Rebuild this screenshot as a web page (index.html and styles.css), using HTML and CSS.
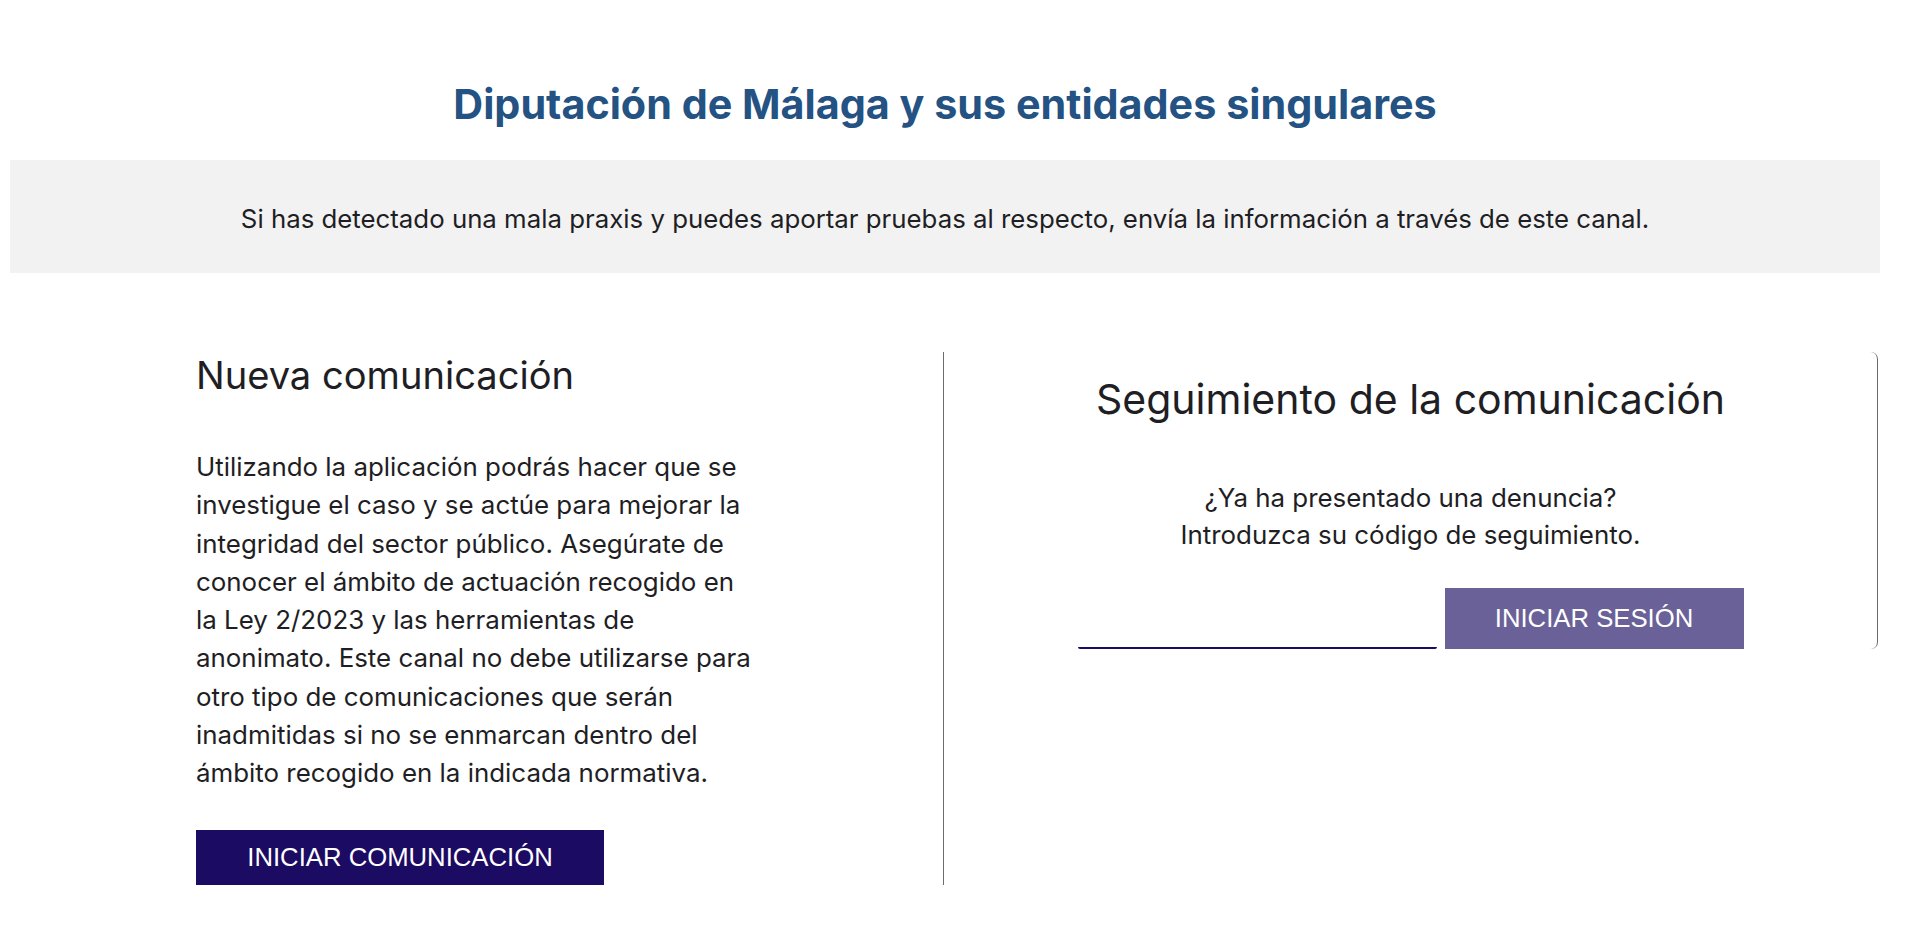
FILE: index.html
```html
<!DOCTYPE html>
<html lang="es">
<head>
<meta charset="utf-8">
<title>Canal de denuncias - Diputación de Málaga</title>
<link rel="stylesheet" href="styles.css">
</head>
<body>
<div class="page">
  <h1 class="title">Diputación de Málaga y sus entidades singulares</h1>
  <div class="intro">
    <p>Si has detectado una mala praxis y puedes aportar pruebas al respecto, envía la información a través de este canal.</p>
  </div>
  <div class="columns">
    <section class="col col-new">
      <h2 class="col-title col-title-new">Nueva comunicación</h2>
      <p class="col-text">Utilizando la aplicación podrás hacer que se<br>investigue el caso y se actúe para mejorar la<br>integridad del sector público. Asegúrate de<br>conocer el ámbito de actuación recogido en<br>la Ley 2/2023 y las herramientas de<br>anonimato. Este canal no debe utilizarse para<br>otro tipo de comunicaciones que serán<br>inadmitidas si no se enmarcan dentro del<br>ámbito recogido en la indicada normativa.</p>
      <button class="btn btn-primary" type="button">INICIAR COMUNICACIÓN</button>
    </section>
    <section class="col col-track">
      <h2 class="col-title col-title-track">Seguimiento de la comunicación</h2>
      <p class="track-text">¿Ya ha presentado una denuncia?<br>Introduzca su código de seguimiento.</p>
      <form class="track-form">
        <input class="code-input" type="text" aria-label="Código de seguimiento">
        <button class="btn btn-secondary" type="button">INICIAR SESIÓN</button>
      </form>
    </section>
  </div>
</div>
</body>
</html>
```
FILE: styles.css
```css
* { box-sizing: border-box; }

html, body {
  margin: 0;
  padding: 0;
  background: #ffffff;
}

body {
  font-family: Inter, "Noto Sans", "Liberation Sans", sans-serif;
  color: #1e1e24;
}

.page {
  margin-left: 10px;
  width: 1870px;
}

.title {
  margin: 80px 0 32px;
  font-size: 41.3px;
  line-height: 48px;
  font-weight: 700;
  color: #235283;
  text-align: center;
}

.intro {
  background: #f2f2f2;
  height: 113px;
  padding-top: 40px;
}

.intro p {
  margin: 0;
  font-size: 25.8px;
  line-height: 38px;
  text-align: center;
}

.columns {
  display: grid;
  grid-template-columns: 934px 934px;
  margin-top: 79px;
  align-items: start;
}

.col-title {
  margin: 0;
  line-height: 40px;
  font-weight: 400;
  color: #1e1e24;
}

.col-title-new {
  margin-top: 3px;
  font-size: 38.1px;
}

.col-title-track {
  font-size: 41px;
}

.col-new {
  border-right: 1px solid #6c6c6c;
  padding-left: 186px;
}

.col-text {
  margin: 53px 0 37px;
  font-size: 25.9px;
  line-height: 38.3px;
}

.btn {
  display: flex;
  align-items: center;
  justify-content: center;
  border: 0;
  margin: 0;
  padding: 0;
  font-family: "Liberation Sans", Arial, sans-serif;
  font-size: 25.7px;
  color: #ffffff;
  cursor: pointer;
}

.btn-primary {
  width: 408px;
  height: 55px;
  background: #1c0b63;
}

.col-track {
  border-right: 1px solid #6c6c6c;
  border-radius: 0 7px 7px 0;
  padding-top: 27px;
  text-align: center;
}

.track-text {
  margin: 60px 0 35px;
  font-size: 25.9px;
  line-height: 37px;
}

.track-form {
  display: flex;
  justify-content: center;
  align-items: flex-end;
  gap: 8px;
}

.code-input {
  width: 359px;
  height: 40px;
  border: 0;
  border-bottom: 2px solid #1c0b63;
  border-radius: 0 0 2px 2px;
  outline: none;
  background: transparent;
  font-family: Inter, sans-serif;
  font-size: 22px;
}

.btn-secondary {
  width: 299px;
  height: 61px;
  background: #6b6199;
}
```
